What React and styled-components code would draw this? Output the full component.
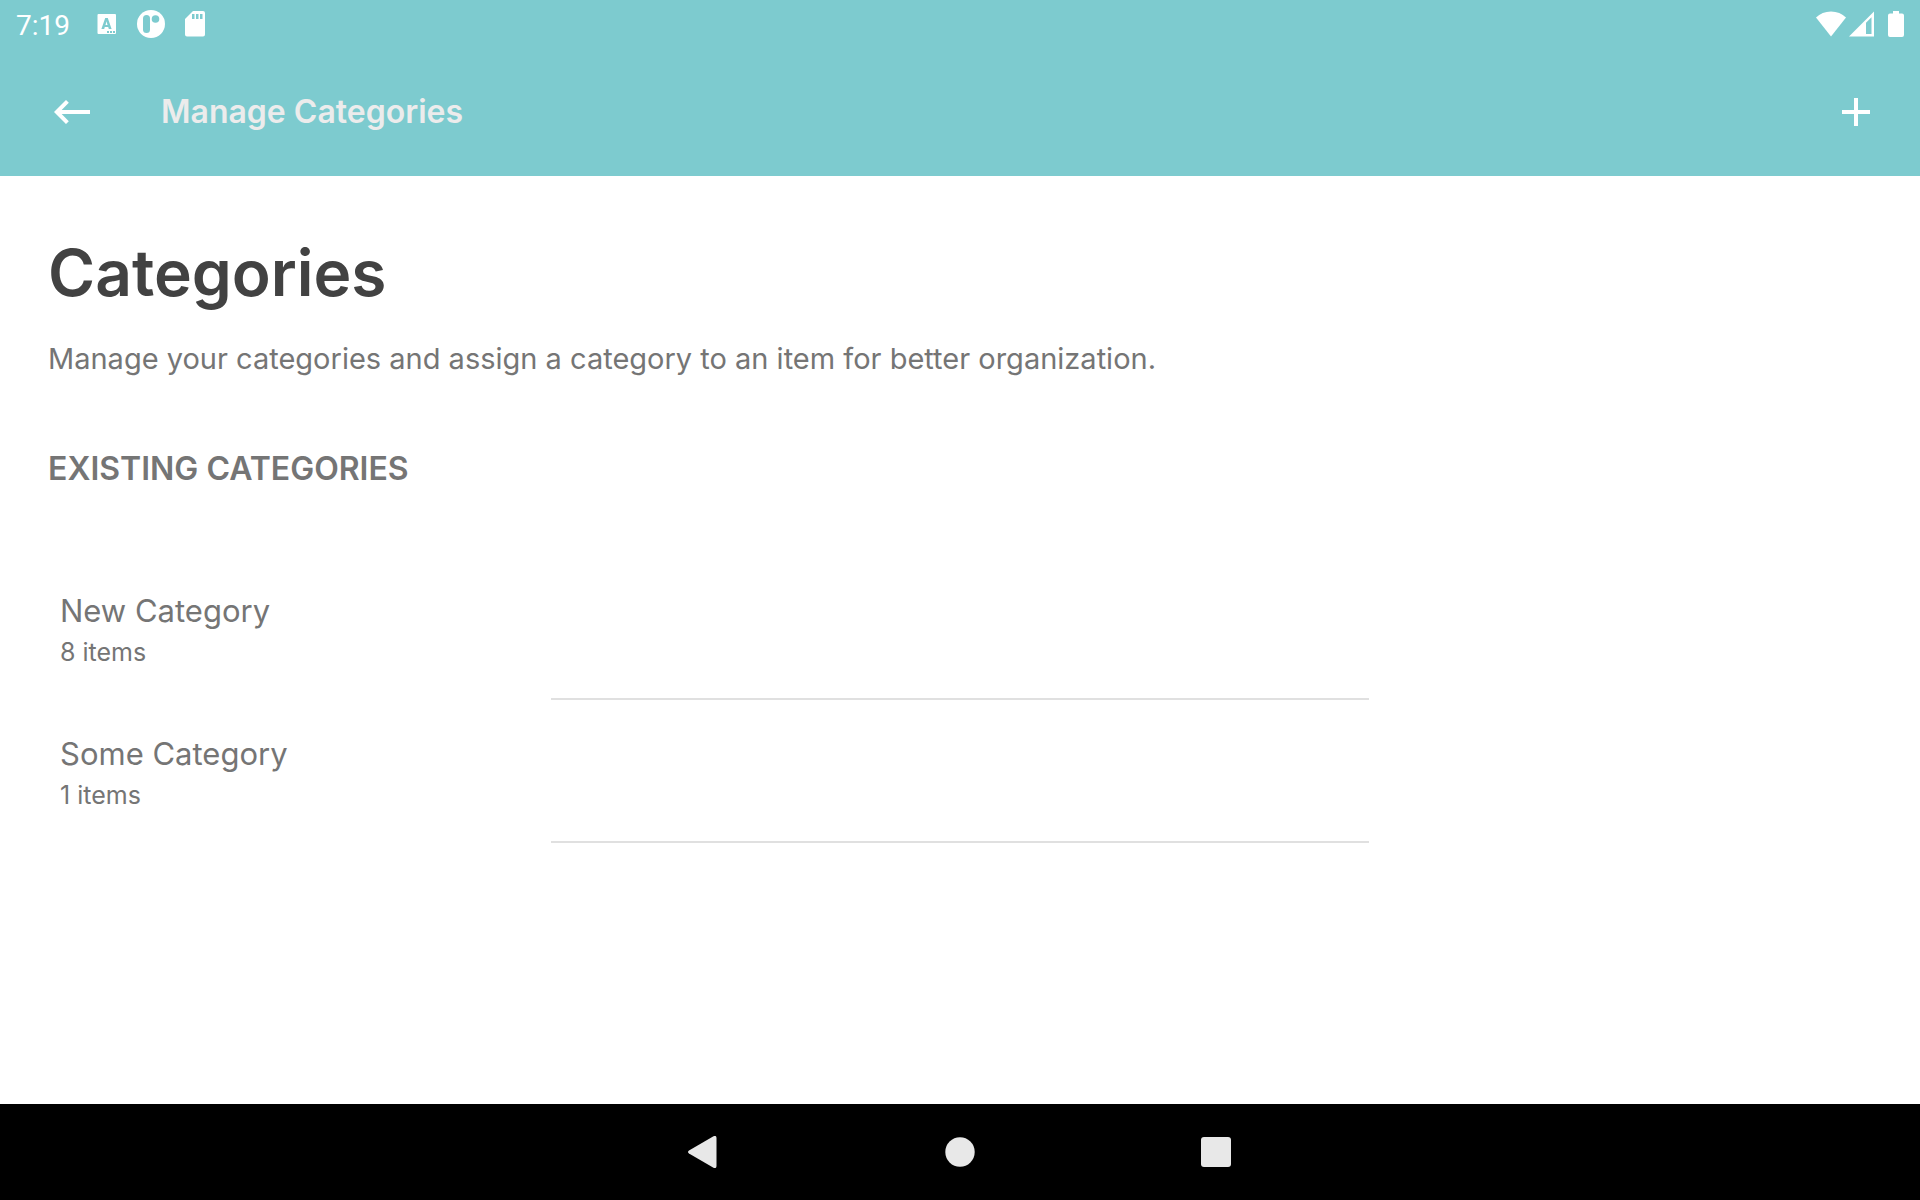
import React from "react";
import styled, { createGlobalStyle } from "styled-components";

const GlobalStyle = createGlobalStyle`
  *, *::before, *::after { box-sizing: border-box; }
  body { margin: 0; background: #ffffff; }
`;

const Screen = styled.div`
  min-height: 100vh;
  display: flex;
  flex-direction: column;
  font-family: "Inter", "Liberation Sans", sans-serif;
  color: #757575;
`;

const Header = styled.header`
  background: #7dcbcf;
  color: #ffffff;
`;

const StatusBar = styled.div`
  height: 48px;
  padding: 0 16px;
  display: flex;
  align-items: center;
  justify-content: space-between;
`;

const StatusGroup = styled.div`
  display: flex;
  align-items: center;
`;

const Clock = styled.time`
  padding-top: 4px;
  margin-right: 27px;
  font: 400 28px/32px "Roboto", sans-serif;
`;

const Notifications = styled.div`
  display: flex;
  align-items: center;
  gap: 20px;
`;

const Toolbar = styled.div`
  height: 128px;
  padding: 0 36px 0 44px;
  display: flex;
  align-items: center;
`;

const IconButton = styled.button`
  width: 56px;
  height: 56px;
  padding: 0;
  border: 0;
  background: none;
  color: inherit;
  display: grid;
  place-items: center;
  cursor: pointer;
`;

const ToolbarTitle = styled.h2`
  flex: 1;
  margin: 0 0 0 61px;
  font-size: 32px;
  line-height: 40px;
  font-weight: 600;
  color: #ececec;
`;

const Content = styled.main`
  flex: 1;
  padding: 56px 48px;
`;

const Title = styled.h1`
  margin: 0;
  font-size: 64px;
  line-height: 82px;
  font-weight: 600;
  color: #424242;
`;

const Description = styled.p`
  margin: 27px 0 72px;
  font-size: 29px;
  line-height: 36px;
`;

const SectionTitle = styled.h3`
  margin: 0;
  font-size: 32px;
  line-height: 40px;
  font-weight: 600;
  text-transform: uppercase;
`;

const CategoryList = styled.ul`
  margin: 68px 0 0;
  padding: 0;
  list-style: none;
`;

const CategoryItem = styled.li`
  padding: 34px 12px 0;
`;

const CategoryName = styled.div`
  font-size: 31px;
  line-height: 40px;
`;

const CategoryCount = styled.div`
  margin-top: 5px;
  font-size: 25px;
  line-height: 32px;
`;

const Divider = styled.hr`
  width: 100%;
  max-width: 818px;
  height: 2px;
  margin: 30px auto 0;
  border: 0;
  background: #e0e0e0;
`;

const NavBar = styled.nav`
  height: 96px;
  background: #000000;
  color: #e8e8e8;
  display: flex;
  align-items: center;
  justify-content: center;
  gap: 200px;
`;

const NavButton = styled(IconButton)`
  height: 96px;
`;

const categories = [
  { name: "New Category", count: 8 },
  { name: "Some Category", count: 1 },
];

const KeyboardIcon = () => (
  <svg width="20" height="20" viewBox="0 0 20 20" fill="currentColor" aria-hidden="true">
    <path
      fillRule="evenodd"
      d="M1.5 0H18a1 1 0 0 1 1 1v18a1 1 0 0 1-1 1H1.5a1 1 0 0 1-1-1V1a1 1 0 0 1 1-1ZM8.200 4 4.400 15h2.800l.6-2h3.400l.6 2h2.800L10.800 4ZM9.500 7.200l1 3.800h-2ZM10 17v2h2v-2ZM13 17v2h2v-2ZM16 17v2h2v-2Z"
    />
  </svg>
);

const AppIcon = () => (
  <svg width="28" height="28" viewBox="0 0 28 28" fill="currentColor" aria-hidden="true">
    <circle cx="14" cy="14" r="14" />
    <rect x="6" y="5" width="7" height="18" rx="3.5" fill="#7dcbcf" />
    <circle cx="18.5" cy="9" r="3.8" fill="#7dcbcf" />
  </svg>
);

const SdCardIcon = () => (
  <svg width="20" height="26" viewBox="0 0 20 26" fill="currentColor" aria-hidden="true">
    <path
      fillRule="evenodd"
      d="M8 0h10a2 2 0 0 1 2 2v21.500a2 2 0 0 1-2 2H2a2 2 0 0 1-2-2V8ZM7 3v5h2.500V3ZM11 3v5h2.500V3ZM15 3v5h2.500V3Z"
    />
  </svg>
);

const WifiIcon = () => (
  <svg width="30" height="26" viewBox="0 0 30 26" fill="currentColor" aria-hidden="true">
    <path d="M0 6.500C4 2.500 9 .5 15 .5S26 2.500 30 6.500L15 25.500Z" />
  </svg>
);

const SignalIcon = () => (
  <svg width="25" height="26" viewBox="0 0 25 26" fill="currentColor" aria-hidden="true">
    <path fillRule="evenodd" d="M25 .5V25.500H0ZM22.500 6.300 17 11.800V23h5.500Z" />
  </svg>
);

const BatteryIcon = () => (
  <svg width="16" height="26" viewBox="0 0 16 26" fill="currentColor" aria-hidden="true">
    <path d="M5 0h6v2.500h3a2 2 0 0 1 2 2V24a2 2 0 0 1-2 2H2a2 2 0 0 1-2-2V4.500a2 2 0 0 1 2-2h3Z" />
  </svg>
);

const ArrowIcon = () => (
  <svg width="36" height="24" viewBox="0 0 36 24" fill="none" stroke="currentColor" strokeWidth="4" aria-hidden="true">
    <path d="M36 12H4M13.400 1.400 2.800 12l10.600 10.600" />
  </svg>
);

const PlusIcon = () => (
  <svg width="28" height="28" viewBox="0 0 28 28" fill="currentColor" aria-hidden="true">
    <path d="M12 0h4v12h12v4H16v12h-4V16H0v-4h12Z" />
  </svg>
);

const BackIcon = () => (
  <svg width="32" height="32" viewBox="0 0 32 32" fill="currentColor" aria-hidden="true">
    <path d="M25.500.3Q28.500-1 28.500 2v28q0 3-3 1.700L1 17.500q-2-1.500 0-3Z" />
  </svg>
);

const HomeIcon = () => (
  <svg width="30" height="30" viewBox="0 0 30 30" fill="currentColor" aria-hidden="true">
    <circle cx="15" cy="15" r="14.700" />
  </svg>
);

const RecentsIcon = () => (
  <svg width="30" height="30" viewBox="0 0 30 30" fill="currentColor" aria-hidden="true">
    <rect width="30" height="30" rx="3" />
  </svg>
);

const Battery = styled.span`
  display: flex;
  margin-left: 14px;
`;

const Signals = styled(StatusGroup)`
  gap: 3px;
`;

export default function App() {
  return (
    <Screen>
      <GlobalStyle />
      <Header>
        <StatusBar>
          <StatusGroup>
            <Clock>7:19</Clock>
            <Notifications>
              <KeyboardIcon />
              <AppIcon />
              <SdCardIcon />
            </Notifications>
          </StatusGroup>
          <StatusGroup>
            <Signals>
              <WifiIcon />
              <SignalIcon />
            </Signals>
            <Battery>
              <BatteryIcon />
            </Battery>
          </StatusGroup>
        </StatusBar>
        <Toolbar>
          <IconButton type="button" aria-label="Back">
            <ArrowIcon />
          </IconButton>
          <ToolbarTitle>Manage Categories</ToolbarTitle>
          <IconButton type="button" aria-label="Add category">
            <PlusIcon />
          </IconButton>
        </Toolbar>
      </Header>
      <Content>
        <Title>Categories</Title>
        <Description>
          Manage your categories and assign a category to an item for better organization.
        </Description>
        <SectionTitle>Existing Categories</SectionTitle>
        <CategoryList>
          {categories.map(({ name, count }) => (
            <CategoryItem key={name}>
              <CategoryName>{name}</CategoryName>
              <CategoryCount>{count} items</CategoryCount>
              <Divider />
            </CategoryItem>
          ))}
        </CategoryList>
      </Content>
      <NavBar>
        <NavButton type="button" aria-label="Back">
          <BackIcon />
        </NavButton>
        <NavButton type="button" aria-label="Home">
          <HomeIcon />
        </NavButton>
        <NavButton type="button" aria-label="Recent apps">
          <RecentsIcon />
        </NavButton>
      </NavBar>
    </Screen>
  );
}
